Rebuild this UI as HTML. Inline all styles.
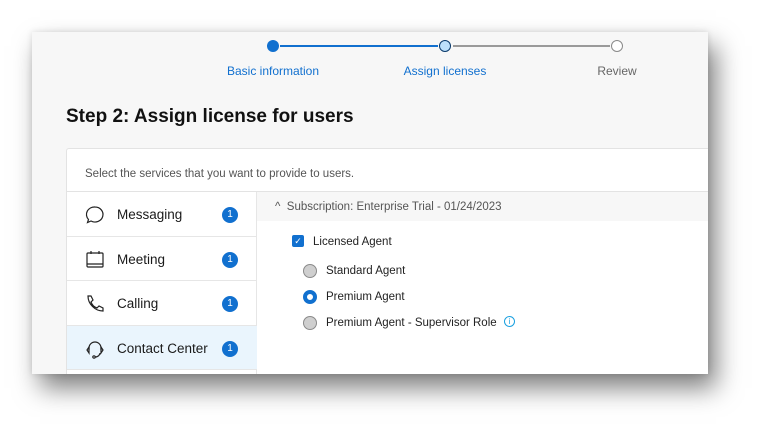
<!DOCTYPE html>
<html><head><style>
*{margin:0;padding:0;box-sizing:border-box}
body{width:770px;height:436px;background:#fff;position:relative;overflow:hidden;font-family:"Liberation Sans",sans-serif;}
.shot{position:absolute;left:32px;top:32px;width:676px;height:342px;background:#f7f7f7;overflow:hidden;box-shadow:0 0 6px rgba(0,0,0,.12),8px 14px 24px rgba(0,0,0,.5);}
.a{position:absolute}
.dot{position:absolute;border-radius:50%}
.lbl{position:absolute;font-size:12px;top:32px;transform:translateX(-50%);white-space:nowrap}
.row{position:absolute;left:0;width:190px;height:44.5px;border-bottom:1px solid #e6e6e6;font-size:13.5px;color:#1a1a1a}
.row span.t{position:absolute;left:50px;top:15px}
.badge{position:absolute;left:155px;top:15px;width:16px;height:16px;border-radius:50%;background:#1170cf;color:#fff;font-size:10px;text-align:center;line-height:16px}
.row svg{position:absolute;left:18px;top:13px}
.rad{position:absolute;width:14px;height:14px;border-radius:50%;background:#cfcfcf;border:1px solid #8a8a8a}
.rt{position:absolute;font-size:11.5px;color:#222}
</style></head><body>
<div class="shot">
 <div class="a" style="left:248px;top:13px;width:82px;height:1.5px;background:#1170cf"></div>
 <div class="a" style="left:330px;top:13px;width:76px;height:1.5px;background:#1170cf"></div>
 <div class="a" style="left:421px;top:13px;width:157px;height:1.5px;background:#9a9a9a"></div>
 <div class="dot" style="left:235px;top:8px;width:12px;height:12px;background:#1170cf"></div>
 <div class="dot" style="left:407px;top:8px;width:12px;height:12px;background:#bde0fb;border:1.5px solid #0a3a6b"></div>
 <div class="dot" style="left:579px;top:8px;width:12px;height:12px;background:#fff;border:1.5px solid #8a8a8a"></div>
 <div class="lbl" style="left:241px;color:#1170cf">Basic information</div>
 <div class="lbl" style="left:413px;color:#1170cf">Assign licenses</div>
 <div class="lbl" style="left:585px;color:#666">Review</div>
 <div class="a" style="left:34px;top:74px;font-size:19px;font-weight:bold;color:#111">Step 2: Assign license for users</div>
 <div class="a" style="left:34px;top:116px;width:650px;height:240px;background:#fff;border:1px solid #e3e3e3;border-radius:3px">
  <div class="a" style="left:18px;top:19px;font-size:11.5px;color:#555">Select the services that you want to provide to users.</div>
  <div class="a" style="left:0;top:42px;width:650px;height:1px;background:#e3e3e3"></div>
  <div class="a" style="left:0;top:43px;width:190px;height:200px;border-right:1px solid #e6e6e6">
   <div class="row" style="top:0"><svg width="20" height="20" viewBox="0 0 20 20" fill="none" stroke="#222" stroke-width="1.2"><path d="M10 2a8 7.5 0 1 1-4 14l-3.5 1.5 1-3A8 7.5 0 0 1 10 2z"/></svg><span class="t">Messaging</span><span class="badge">1</span></div>
   <div class="row" style="top:44.5px"><svg width="20" height="20" viewBox="0 0 20 20" fill="none" stroke="#222" stroke-width="1.2"><rect x="2" y="3" width="16" height="14" rx="1"/><path d="M2 14h16M6 1v3M14 1v3"/></svg><span class="t">Meeting</span><span class="badge">1</span></div>
   <div class="row" style="top:89px"><svg width="20" height="20" viewBox="0 0 20 20" fill="none" stroke="#222" stroke-width="1.2"><path d="M3 2l3 0 2 4-2 2c1 3 3 5 6 6l2-2 4 2v3c-8 0-15-7-15-15z"/></svg><span class="t">Calling</span><span class="badge">1</span></div>
   <div class="row" style="top:133.5px;background:#eaf5fd"><svg width="20" height="20" viewBox="0 0 20 20" fill="none" stroke="#222" stroke-width="1.2"><path d="M4 11V9a6 6 0 0 1 12 0v2"/><path d="M4 8l-2 3 2 3zM16 8l2 3-2 3z"/><path d="M15 14c0 2-2 4-5 4"/><circle cx="9" cy="18" r="1.2"/></svg><span class="t">Contact Center</span><span class="badge">1</span></div>
  </div>
  <div class="a" style="left:190px;top:43px;width:460px;height:29px;background:#f7f7f7"></div>
  <div class="a" style="left:208px;top:52px;font-size:11.5px;color:#555">^&nbsp; Subscription: Enterprise Trial - 01/24/2023</div>
  <div class="a" style="left:225px;top:86px;width:12px;height:12px;background:#1170cf;border-radius:2px;color:#fff;font-size:9px;line-height:12px;text-align:center">✓</div>
  <div class="a" style="left:246px;top:87px;font-size:11.5px;color:#222">Licensed Agent</div>
  <div class="rad" style="left:236px;top:115px"></div><div class="rt" style="left:259px;top:116px">Standard Agent</div>
  <div class="rad" style="left:236px;top:141px;background:#fff;border:4px solid #1170cf"></div><div class="rt" style="left:259px;top:142px">Premium Agent</div>
  <div class="rad" style="left:236px;top:167px"></div><div class="rt" style="left:259px;top:168px">Premium Agent - Supervisor Role</div>
  <div class="a" style="left:437px;top:167px;width:11px;height:11px;border:1px solid #1aa0e0;border-radius:50%;color:#1aa0e0;font-size:8px;text-align:center;line-height:9px">i</div>
 </div>
</div>
</body></html>
